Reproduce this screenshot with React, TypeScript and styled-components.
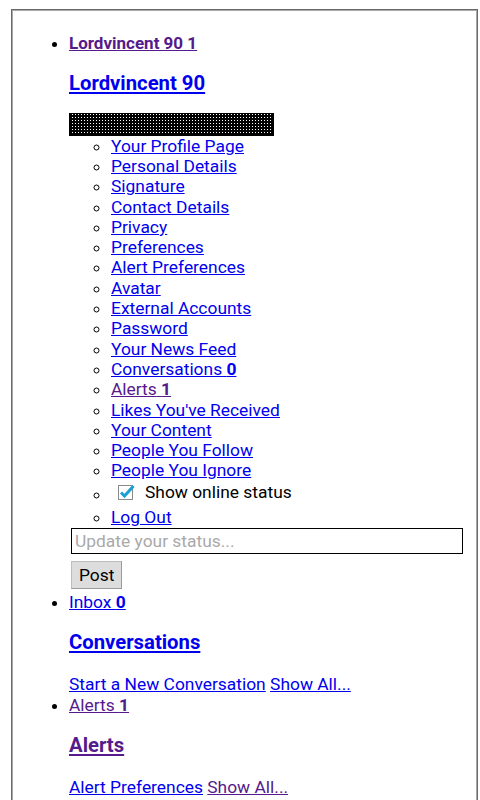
import styled, { createGlobalStyle } from "styled-components";

const GlobalStyle = createGlobalStyle`
  html, body {
    margin: 0;
    padding: 0;
    background: #fff;
  }
  body {
    font-family: Roboto, "Liberation Sans", Arial, sans-serif;
    font-size: 17.4px;
    line-height: 20.3px;
    color: #000;
  }
  a {
    color: #0000ee;
  }
`;

const accountLinks = [
  { label: "Your Profile Page" },
  { label: "Personal Details" },
  { label: "Signature" },
  { label: "Contact Details" },
  { label: "Privacy" },
  { label: "Preferences" },
  { label: "Alert Preferences" },
  { label: "Avatar" },
  { label: "External Accounts" },
  { label: "Password" },
  { label: "Your News Feed" },
  { label: "Conversations", count: "0" },
  { label: "Alerts", count: "1", visited: true },
  { label: "Likes You've Received" },
  { label: "Your Content" },
  { label: "People You Follow" },
  { label: "People You Ignore" },
];

const App = () => {
  return (
    <>
      <GlobalStyle />
      <Frame>
        <TopList>
          <TopItem>
            <NavLink href="#" $visited>
              <UserName>Lordvincent 90 1</UserName>
            </NavLink>
            <Heading>
              <NavLink href="#">Lordvincent 90</NavLink>
            </Heading>
            <AvatarStrip />
            <SubList>
              {accountLinks.map((link, i) => (
                <SubItem key={i}>
                  <NavLink href="#" $visited={link.visited}>
                    {link.label}
                    {link.count && <strong> {link.count}</strong>}
                  </NavLink>
                </SubItem>
              ))}
              <CheckItem>
                <CheckLabel>
                  <CheckBox viewBox="0 0 17 17">
                    <rect x="0.5" y="2.5" width="14" height="14" fill="#fff" stroke="#8a8a8a" />
                    <path d="M3 9.5 L6.5 13 L15.5 3" fill="none" stroke="#1e9fd4" strokeWidth="3" />
                  </CheckBox>
                  Show online status
                </CheckLabel>
              </CheckItem>
              <SubItem>
                <NavLink href="#">Log Out</NavLink>
              </SubItem>
            </SubList>
            <StatusForm>
              <StatusInput placeholder="Update your status..." />
              <PostButton type="button">Post</PostButton>
            </StatusForm>
          </TopItem>
          <TopItem>
            <NavLink href="#">
              Inbox <strong>0</strong>
            </NavLink>
            <Heading>
              <NavLink href="#">Conversations</NavLink>
            </Heading>
            <LinkRow>
              <NavLink href="#">Start a New Conversation</NavLink>{" "}
              <NavLink href="#">Show All...</NavLink>
            </LinkRow>
          </TopItem>
          <TopItem>
            <NavLink href="#" $visited>
              Alerts <strong>1</strong>
            </NavLink>
            <Heading>
              <NavLink href="#" $visited>
                Alerts
              </NavLink>
            </Heading>
            <LinkRow>
              <NavLink href="#">Alert Preferences</NavLink>{" "}
              <NavLink href="#" $visited>
                Show All...
              </NavLink>
            </LinkRow>
          </TopItem>
        </TopList>
      </Frame>
    </>
  );
};

export default App;

const Frame = styled.div`
  margin: 9px 2px 0 11px;
  border: 1px solid #6a6a6a;
  box-shadow: inset 1px 1px 0 #a8a8a8, inset -1px 0 0 #a8a8a8;
  padding: 16px 16px 40px 17px;
  min-height: 900px;
`;

const TopList = styled.ul`
  list-style: disc;
  margin: 7px 0 0 0;
  padding-left: 40px;
`;

const TopItem = styled.li``;

const UserName = styled.strong`
  font-size: 17px;
`;

const NavLink = styled.a<{ $visited?: boolean }>`
  color: ${(p) => (p.$visited ? "#551a8b" : "#0000ee")};
  text-decoration: underline;
`;

const Heading = styled.h3`
  font-size: 20.3px;
  font-weight: 700;
  line-height: 22px;
  margin: 18.7px 0;
`;

const AvatarStrip = styled.div`
  width: 205px;
  height: 23px;
  background-color: #fff;
  background-image:
    linear-gradient(90deg, #000 0 2px, transparent 2px),
    linear-gradient(0deg, #000 0 2px, transparent 2px);
  background-size: 3px 3px;
  border: 1px solid #000;
  box-sizing: border-box;
`;

const SubList = styled.ul`
  list-style: circle;
  margin: 0;
  padding-left: 42px;
`;

const SubItem = styled.li``;

const CheckItem = styled.li`
  padding: 1px 0 2px;
`;

const CheckLabel = styled.label`
  display: inline-flex;
  align-items: center;
  gap: 10px;
  padding-left: 7px;
  color: #000;
`;

const CheckBox = styled.svg`
  width: 17px;
  height: 17px;
`;

const StatusForm = styled.form`
  display: flex;
  flex-direction: column;
  align-items: flex-start;
  gap: 7px;
  margin-top: 1px;
  padding-left: 2px;
`;

const StatusInput = styled.input`
  box-sizing: border-box;
  width: 392px;
  height: 26px;
  margin: 0;
  border: 1px solid #000;
  padding: 0 3px;
  font-family: Roboto, "Liberation Sans", Arial, sans-serif;
  font-size: 17.4px;
  color: #000;
  &::placeholder {
    color: #a9a9a9;
  }
`;

const PostButton = styled.button`
  box-sizing: border-box;
  width: 51px;
  height: 28px;
  margin: 0 0 3px;
  padding: 0 7px;
  background: #dddddd;
  border: 1px solid #bdbdbd;
  border-bottom-color: #9a9a9a;
  border-right-color: #9a9a9a;
  font-family: Roboto, "Liberation Sans", Arial, sans-serif;
  font-size: 17.4px;
  color: #000;
`;

const LinkRow = styled.div`
  padding: 2px 0 1px;
`;
